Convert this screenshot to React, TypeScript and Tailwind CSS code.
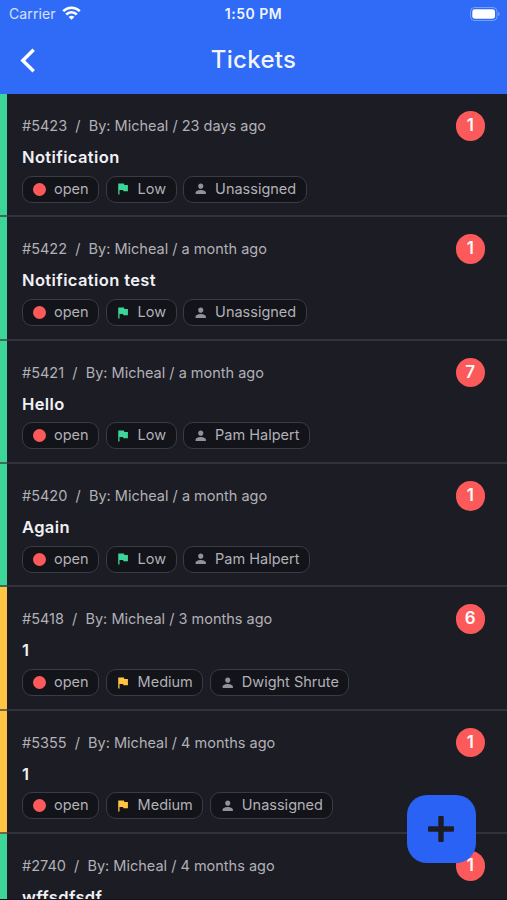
import type { ReactNode } from 'react'
import { MdFlag, MdPerson } from 'react-icons/md'

type Priority = 'Low' | 'Medium'

interface Ticket {
  id: number
  title: string
  author: string
  age: string
  priority: Priority
  assignee?: string
  count: number
}

const TICKETS: Ticket[] = [
  { id: 5423, title: 'Notification', author: 'Micheal', age: '23 days ago', priority: 'Low', assignee: 'Unassigned', count: 1 },
  { id: 5422, title: 'Notification test', author: 'Micheal', age: 'a month ago', priority: 'Low', assignee: 'Unassigned', count: 1 },
  { id: 5421, title: 'Hello', author: 'Micheal', age: 'a month ago', priority: 'Low', assignee: 'Pam Halpert', count: 7 },
  { id: 5420, title: 'Again', author: 'Micheal', age: 'a month ago', priority: 'Low', assignee: 'Pam Halpert', count: 1 },
  { id: 5418, title: '1', author: 'Micheal', age: '3 months ago', priority: 'Medium', assignee: 'Dwight Shrute', count: 6 },
  { id: 5355, title: '1', author: 'Micheal', age: '4 months ago', priority: 'Medium', assignee: 'Unassigned', count: 1 },
  { id: 2740, title: 'wffsdfsdf', author: 'Micheal', age: '4 months ago', priority: 'Low', count: 1 },
]

const BAR_COLOR: Record<Priority, string> = {
  Low: 'bg-[#3dd598]',
  Medium: 'bg-[#ffc542]',
}

const FLAG_COLOR: Record<Priority, string> = {
  Low: 'text-[#3dd598]',
  Medium: 'text-[#ffc542]',
}

function StatusBar() {
  return (
    <div className="grid h-7 grid-cols-3 items-center px-[7px] text-[14px] leading-none">
      <div className="flex items-center gap-[6px] pl-[2px] text-white/80">
        <span className="tracking-[0.1px]">Carrier</span>
        <svg width="19" height="14" viewBox="0 0 19 14" fill="none" stroke="white" strokeWidth="2.6" className="-mt-[2px]">
          <path d="M1.2 5.1a11.8 11.8 0 0 1 16.6 0" />
          <path d="M4.2 8.5a7.5 7.5 0 0 1 10.6 0" />
          <path d="M9.5 13.8 6.6 11a4 4 0 0 1 5.8 0z" fill="white" stroke="none" />
        </svg>
      </div>
      <div className="text-center font-semibold tracking-[0.5px] text-white/95">1:50 PM</div>
      <svg width="30" height="14" viewBox="0 0 30 14" className="-mt-[1px] justify-self-end">
        <rect x="0.5" y="0.5" width="26.5" height="13" rx="4" fill="none" stroke="white" strokeOpacity="0.35" />
        <rect x="2.3" y="2.3" width="22.7" height="9.4" rx="2.4" fill="white" />
        <path d="M28.3 4.8c1.6.8 1.6 3.6 0 4.4z" fill="white" fillOpacity="0.45" />
      </svg>
    </div>
  )
}

function Header() {
  return (
    <header className="h-[94px] shrink-0 bg-[#2f6bf6] text-white">
      <StatusBar />
      <div className="grid h-[64px] grid-cols-3 items-center">
        <svg width="16" height="25" viewBox="0 0 16 25" fill="none" stroke="white" strokeWidth="3.4" className="ml-5">
          <path d="M13.7 1.7 2.8 12.5 13.7 23.3" />
        </svg>
        <h1 className="text-center text-[24px] font-medium tracking-[0.3px] text-white/95">Tickets</h1>
      </div>
    </header>
  )
}

function Pill({ icon, children }: { icon: ReactNode; children: ReactNode }) {
  return (
    <div className="flex h-[27px] items-center rounded-[10px] border border-[#3a3b44] bg-[#13131a] pr-[9.5px] pl-[9.5px] text-[14.5px] leading-none text-[#b1b1b6]">
      <span className="flex w-[21.5px] items-center">{icon}</span>
      <span>{children}</span>
    </div>
  )
}

function TicketRow({ ticket }: { ticket: Ticket }) {
  return (
    <li className="flex h-[123.35px] shrink-0 flex-col">
      <div className="flex flex-1">
        <div className={`w-[7px] shrink-0 ${BAR_COLOR[ticket.priority]}`} />
        <div className="flex flex-1 items-start justify-between pr-[22px] pl-[15px]">
          <div className="pt-[22px]">
            <p className="text-[14.5px] leading-5 whitespace-pre text-[#b1b1b6]">
              {`#${ticket.id}  /  By: ${ticket.author} / ${ticket.age}`}
            </p>
            <h2 className="mt-[11px] text-[16.5px] leading-5 font-semibold tracking-[0.38px] text-[#f1f1f5]">
              {ticket.title}
            </h2>
            {ticket.assignee && (
              <div className="mt-[8.5px] flex gap-[6.5px]">
                <Pill icon={<span className="h-[13px] w-[13px] rounded-full bg-[#fc5a5a]" />}>open</Pill>
                <Pill icon={<MdFlag className={`h-[15.5px] w-[15.5px] -ml-[1px] ${FLAG_COLOR[ticket.priority]}`} />}>
                  {ticket.priority}
                </Pill>
                <Pill icon={<MdPerson className="-ml-[0.5px] h-[15.5px] w-[15.5px] text-[#92929d]" />}>{ticket.assignee}</Pill>
              </div>
            )}
          </div>
          <span className="mt-[17px] flex h-[29.5px] w-[29.5px] items-center justify-center rounded-full bg-[#fc5a5a] text-[17px] font-semibold text-[#fafafb]">
            {ticket.count}
          </span>
        </div>
      </div>
      <div className={BAR_COLOR[ticket.priority]}>
        <div className="flex h-[2px]">
          <div className="w-[7px] bg-[#3a3a43]/70" />
          <div className="flex-1 bg-[#32323b]" />
        </div>
      </div>
    </li>
  )
}

export default function App() {
  return (
    <div className="relative flex h-[900px] w-[507px] flex-col overflow-hidden border-b border-[#13131a] bg-[#1c1c24] font-['Inter',sans-serif]">
      <Header />
      <ul className="flex flex-1 flex-col overflow-hidden">
        {TICKETS.map((ticket) => (
          <TicketRow key={ticket.id} ticket={ticket} />
        ))}
      </ul>
      <button
        type="button"
        aria-label="New ticket"
        className="absolute right-[31.5px] bottom-[36px] flex h-[68.5px] w-[68.5px] items-center justify-center rounded-[20px] bg-[#2962f5]"
      >
        <svg width="26" height="26" viewBox="0 0 26 26" fill="#1c1c24">
          <rect x="10.3" y="0" width="5.4" height="26" rx="1" />
          <rect x="0" y="10.3" width="26" height="5.4" rx="1" />
        </svg>
      </button>
    </div>
  )
}
